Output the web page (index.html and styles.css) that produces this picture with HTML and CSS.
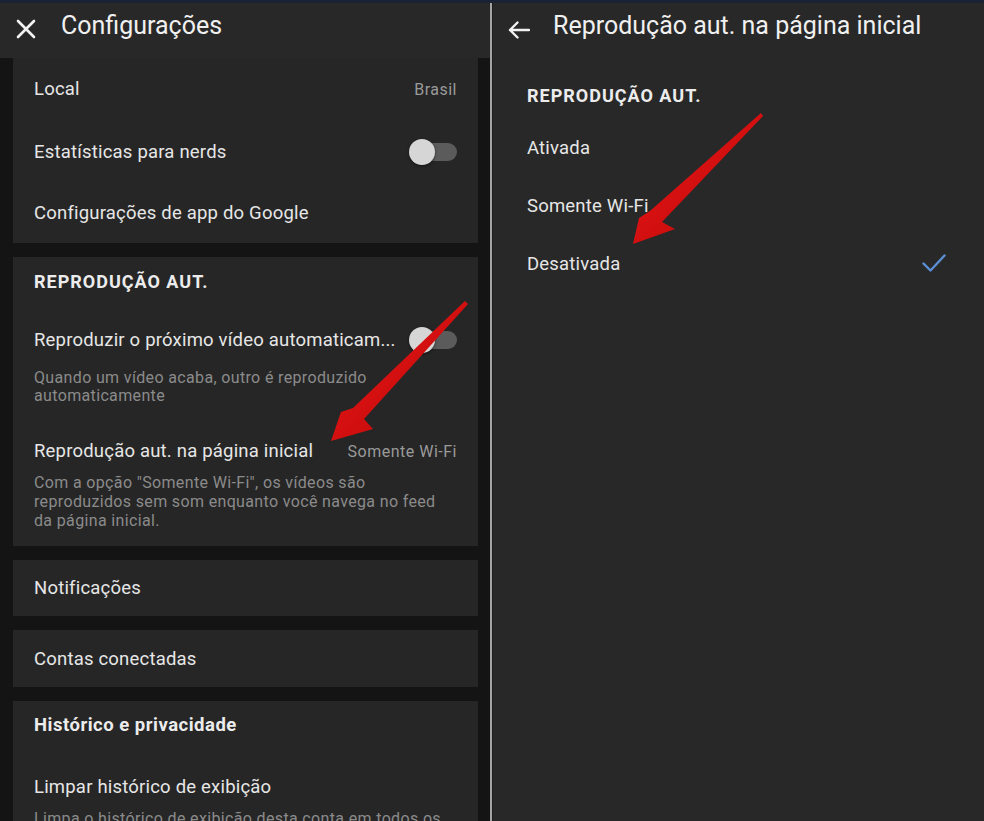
FILE: index.html
```html
<!DOCTYPE html>
<html lang="pt-BR">
<head>
<meta charset="utf-8">
<title>Configurações</title>
<link rel="stylesheet" href="styles.css">
</head>
<body>
<div class="topstrip"></div>
<div class="panels">
  <section class="left">
    <header class="bar">
      <svg class="icon-x" width="20" height="20" viewBox="0 0 20 20"><path d="M2 2 L18 18 M18 2 L2 18" stroke="#f2f2f2" stroke-width="2.6" stroke-linecap="round" fill="none"/></svg>
      <h1 class="title">Configurações</h1>
    </header>
    <div class="cards">
      <div class="card c1">
        <div class="row r1"><span class="label">Local</span><span class="value">Brasil</span></div>
        <div class="row r2"><span class="label">Estatísticas para nerds</span><span class="toggle"><span class="knob"></span></span></div>
        <div class="row r3"><span class="label">Configurações de app do Google</span></div>
      </div>
      <div class="card c2">
        <div class="sect">REPRODUÇÃO AUT.</div>
        <div class="item i1">
          <div class="line"><span class="label">Reproduzir o próximo vídeo automaticam...</span><span class="toggle"><span class="knob"></span></span></div>
          <p class="sub s1">Quando um vídeo acaba, outro é reproduzido<br>automaticamente</p>
        </div>
        <div class="item i2">
          <div class="line"><span class="label">Reprodução aut. na página inicial</span><span class="value">Somente Wi-Fi</span></div>
          <p class="sub s2">Com a opção "Somente Wi-Fi", os vídeos são<br>reproduzidos sem som enquanto você navega no feed<br>da página inicial.</p>
        </div>
      </div>
      <div class="card c3"><span class="label">Notificações</span></div>
      <div class="card c4"><span class="label">Contas conectadas</span></div>
      <div class="card c5">
        <div class="sect2">Histórico e privacidade</div>
        <div class="label l5">Limpar histórico de exibição</div>
        <p class="sub s3">Limpa o histórico de exibição desta conta em todos os</p>
      </div>
    </div>
  </section>
  <div class="divider"></div>
  <section class="right">
    <header class="bar">
      <svg class="icon-back" width="22" height="18" viewBox="0 0 22 18"><path d="M21 9 H2 M9.5 1.5 L2 9 L9.5 16.5" stroke="#f2f2f2" stroke-width="2.4" stroke-linecap="round" stroke-linejoin="round" fill="none"/></svg>
      <h1 class="title">Reprodução aut. na página inicial</h1>
    </header>
    <div class="options">
      <div class="sect">REPRODUÇÃO AUT.</div>
      <div class="opt"><span class="label">Ativada</span></div>
      <div class="opt"><span class="label">Somente Wi-Fi</span></div>
      <div class="opt"><span class="label">Desativada</span>
        <svg class="check" width="24" height="19" viewBox="0 0 24 19"><path d="M1.5 9.5 L8.5 16.5 L22.5 1.5" stroke="#5b8fd6" stroke-width="2.4" stroke-linecap="round" stroke-linejoin="round" fill="none"/></svg>
      </div>
    </div>
  </section>
</div>
<svg class="arrows" width="984" height="821" viewBox="0 0 984 821">
  <defs>
    <linearGradient id="red1" x1="0" y1="0" x2="1" y2="1">
      <stop offset="0" stop-color="#f21818"/>
      <stop offset="1" stop-color="#b50707"/>
    </linearGradient>
  </defs>
  <polygon fill="url(#red1)" points="331,441 341,412 353,408 465,301 468,304 364,419 373,429"/>
  <polygon fill="url(#red1)" points="633,244 639,218 650,211 761,113 763,116 662,222 675,229"/>
</svg>
</body>
</html>
```
FILE: styles.css
```css
body {
  margin: 0;
  width: 984px;
  height: 821px;
  overflow: hidden;
  background: #141414;
  font-family: Roboto, "Noto Sans", "Liberation Sans", sans-serif;
  color: #e6e6e6;
  position: relative;
}

.topstrip {
  height: 3px;
  background: #1b2233;
}

.panels {
  display: flex;
  height: 818px;
}

.left {
  width: 490px;
  background: #141414;
}

.divider {
  width: 2px;
  background: #a4a4a4;
}

.right {
  flex: 1;
  background: #282828;
  border-left: 1px solid #1e1e1e;
}

.bar {
  height: 55px;
  box-sizing: border-box;
  padding-top: 8px;
  background: #282828;
  display: flex;
  align-items: flex-start;
}

.title {
  margin: 0;
  font-size: 25px;
  line-height: 30px;
  font-weight: 400;
  color: #f0f0f0;
}

.icon-x {
  margin: 8px 0 0 16px;
  flex: none;
}

.left .title {
  margin-left: 25px;
}

.icon-back {
  margin: 10px 0 0 15px;
  flex: none;
}

.right .title {
  margin-left: 23px;
}

.cards {
  padding: 0 12px 0 13px;
  display: flex;
  flex-direction: column;
  gap: 14px;
}

.card {
  background: #262626;
  padding: 0 21px;
}

.label {
  font-size: 18.5px;
  line-height: 26px;
  color: #e6e6e6;
  letter-spacing: 0.2px;
}

.value {
  font-size: 16px;
  color: #9a9a9a;
  letter-spacing: 0.5px;
}

.row {
  display: flex;
  align-items: center;
  justify-content: space-between;
}

.r1 { height: 62px; }
.r2 { height: 63px; }
.r3 { height: 60px; }

.toggle {
  position: relative;
  width: 38px;
  height: 18px;
  border-radius: 9px;
  background: #5b5b5b;
  flex: none;
}

.knob {
  position: absolute;
  left: -10px;
  top: -4px;
  width: 26px;
  height: 26px;
  border-radius: 50%;
  background: #d6d6d6;
  box-shadow: 0 1px 3px rgba(0, 0, 0, 0.5);
}

.sect {
  font-size: 18px;
  line-height: 26px;
  font-weight: 700;
  color: #ececec;
  letter-spacing: 1px;
}

.c2 {
  padding-top: 12px;
  padding-bottom: 16px;
}

.c2 .sect {
  height: 38px;
}

.line {
  display: flex;
  align-items: center;
  justify-content: space-between;
  height: 26px;
}

.i1 {
  padding-top: 20px;
}

.i2 {
  padding-top: 33px;
}

.sub {
  margin: 0;
  font-size: 16px;
  color: #8b8b8b;
  letter-spacing: 0.35px;
}

.s1 {
  margin-top: 16px;
  line-height: 18px;
}

.s2 {
  margin-top: 9px;
  line-height: 19px;
}

.c3 {
  height: 56px;
  display: flex;
  align-items: center;
}

.c4 {
  height: 57px;
  display: flex;
  align-items: center;
}

.c5 {
  padding-top: 11px;
  height: 120px;
}

.sect2 {
  font-size: 18.5px;
  line-height: 26px;
  font-weight: 700;
  color: #ececec;
  letter-spacing: 0.5px;
}

.l5 {
  margin-top: 36px;
}

.s3 {
  margin-top: 10px;
  line-height: 18px;
}

.options {
  padding: 25px 38px 0 34px;
}

.options .sect {
  margin-bottom: 10px;
}

.opt {
  height: 58px;
  display: flex;
  align-items: center;
  justify-content: space-between;
}

.check {
  margin-top: -2px;
}

.arrows {
  position: absolute;
  left: 0;
  top: 0;
  pointer-events: none;
}
```
